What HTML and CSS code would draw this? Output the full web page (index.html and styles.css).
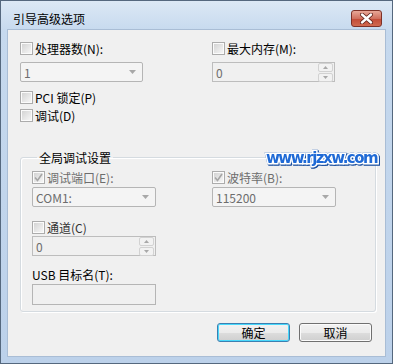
FILE: index.html
```html
<!DOCTYPE html>
<html lang="zh-CN">
<head>
    <meta charset="UTF-8">
    <title>引导高级选项</title>
    <link rel="stylesheet" href="styles.css">
</head>
<body>
    <div class="window">
        <div class="titlebar">
            <span class="title">引导高级选项</span>
            <span class="close">
                <svg width="13" height="11" viewBox="0 0 13 11">
                    <path d="M2 1.5 L11 9.5 M11 1.5 L2 9.5" stroke="#5a1e16" stroke-width="4" stroke-linecap="round"/>
                    <path d="M2 1.5 L11 9.5 M11 1.5 L2 9.5" stroke="#fff" stroke-width="2.4" stroke-linecap="round"/>
                </svg>
            </span>
        </div>
        <div class="client">
            <div class="cols">
                <div class="field">
                    <div class="check"><span class="box"></span>处理器数(N):</div>
                    <div class="combo"><span>1</span><svg class="arrow" width="7" height="4"><path d="M0 0 H7 L3.5 4 Z" fill="#a8a8a8"/></svg></div>
                </div>
                <div class="field">
                    <div class="check"><span class="box"></span>最大内存(M):</div>
                    <div class="spin">
                        <span>0</span>
                        <span class="spin-btns">
                            <i><svg width="5" height="3"><path d="M0 3 H5 L2.5 0 Z" fill="#a8a8a8"/></svg></i>
                            <i><svg width="5" height="3"><path d="M0 0 H5 L2.5 3 Z" fill="#a8a8a8"/></svg></i>
                        </span>
                    </div>
                </div>
            </div>
            <div class="check pci"><span class="box"></span>PCI 锁定(P)</div>
            <div class="check debug"><span class="box"></span>调试(D)</div>

            <fieldset class="group">
                <legend>全局调试设置</legend>
                <div class="group-cols">
                    <div class="field">
                        <div class="check off"><span class="box"><svg width="9" height="9"><path d="M1 4.5 L3.5 7.5 L8 1" stroke="#a6a6a6" stroke-width="1.6" fill="none"/></svg></span>调试端口(E):</div>
                        <div class="combo small-gap"><span>COM1:</span><svg class="arrow" width="7" height="4"><path d="M0 0 H7 L3.5 4 Z" fill="#a8a8a8"/></svg></div>
                    </div>
                    <div class="field">
                        <div class="check off"><span class="box"><svg width="9" height="9"><path d="M1 4.5 L3.5 7.5 L8 1" stroke="#a6a6a6" stroke-width="1.6" fill="none"/></svg></span>波特率(B):</div>
                        <div class="combo small-gap"><span>115200</span><svg class="arrow" width="7" height="4"><path d="M0 0 H7 L3.5 4 Z" fill="#a8a8a8"/></svg></div>
                    </div>
                </div>
                <div class="check channel"><span class="box"></span>通道(C)</div>
                <div class="spin small-gap wide">
                    <span>0</span>
                    <span class="spin-btns">
                        <i><svg width="5" height="3"><path d="M0 3 H5 L2.5 0 Z" fill="#a8a8a8"/></svg></i>
                        <i><svg width="5" height="3"><path d="M0 0 H5 L2.5 3 Z" fill="#a8a8a8"/></svg></i>
                    </span>
                </div>
                <div class="usb-label">USB 目标名(T):</div>
                <div class="textbox"></div>
            </fieldset>

            <div class="buttons">
                <button class="btn default">确定</button>
                <button class="btn">取消</button>
            </div>
        </div>
        <div class="watermark">www.rjzxw.com</div>
    </div>
</body>
</html>
```

FILE: styles.css
```css
body {
    margin: 0;
    font: 12px/13px "Noto Sans CJK SC", sans-serif;
    color: #000;
}
.window {
    position: relative;
    width: 393px;
    height: 364px;
    box-sizing: border-box;
    border: 1px solid #55687e;
    background: linear-gradient(#dce8f5, #c6d9ee 30px, #bcd1ea);
    padding: 0 7px 7px;
    display: flex;
    flex-direction: column;
}
.titlebar {
    height: 29px;
    display: flex;
    justify-content: space-between;
    align-items: flex-start;
    padding: 0 3px 0 5px;
}
.title {
    margin-top: 11px;
}
.close {
    margin-top: 9px;
    width: 31px;
    height: 17px;
    box-sizing: border-box;
    border: 1px solid #7d3127;
    border-radius: 3px;
    background: linear-gradient(#e8a898, #d0705e 50%, #c24a36 51%, #d06a50);
    display: flex;
    align-items: center;
    justify-content: center;
}
.client {
    flex: 1;
    background: #f0f0f0;
    box-shadow: 0 0 0 1px #a9bdd5;
    padding: 12px 0 0 12px;
}
.cols {
    display: grid;
    grid-template-columns: 192px 123px;
}
.check {
    display: flex;
    align-items: center;
    gap: 2px;
    height: 13px;
}
.check.off {
    color: #6d6d6d;
}
.box {
    width: 13px;
    height: 13px;
    box-sizing: border-box;
    border: 1px solid #acacac;
    padding: 1px;
    background: linear-gradient(135deg, #d4d4d4, #f6f6f6) content-box, #fbfbfb;
    display: flex;
    align-items: center;
    justify-content: center;
}
.combo {
    margin-top: 7px;
    width: 123px;
    height: 20px;
    box-sizing: border-box;
    border: 1px solid #b5b5b5;
    border-radius: 2px;
    background: #f4f4f4;
    color: #6d6d6d;
    display: flex;
    align-items: center;
    justify-content: space-between;
    padding: 0 6px 0 3px;
}
.spin {
    margin-top: 7px;
    width: 123px;
    height: 20px;
    box-sizing: border-box;
    border: 1px solid #bdbdbd;
    background: #f0f0f0;
    color: #6d6d6d;
    display: flex;
    align-items: center;
    justify-content: space-between;
    padding: 0 1px 0 3px;
}
.spin-btns {
    display: flex;
    flex-direction: column;
    gap: 1px;
    width: 15px;
}
.spin-btns i {
    height: 7px;
    border: 1px solid #d2d2d2;
    border-radius: 2px;
    background: #f2f2f2;
    display: flex;
    align-items: center;
    justify-content: center;
}
.pci {
    margin-top: 9px;
}
.debug {
    margin-top: 5px;
}
.group {
    margin: 29px 0 0;
    width: 356px;
    box-sizing: border-box;
    border: 1px solid #d5dbe0;
    border-radius: 3px;
    box-shadow: inset 1px 1px #fff, 1px 1px #fff;
    padding: 7px 0 6px 11px;
}
.group legend {
    padding: 0 2px;
    margin-left: 5px;
}
.group-cols {
    display: grid;
    grid-template-columns: 180px 124px;
}
.small-gap {
    margin-top: 3px;
    width: 124px;
}
.channel {
    margin-top: 14px;
    color: #333;
}
.spin.wide {
    margin-top: 2px;
}
.usb-label {
    margin-top: 12px;
}
.textbox {
    margin-top: 3px;
    width: 124px;
    height: 21px;
    box-sizing: border-box;
    border: 1px solid #b5b5b5;
    background: #f0f0f0;
}
.buttons {
    display: flex;
    justify-content: flex-end;
    gap: 9px;
    margin: 11px 13px 0 0;
}
.btn {
    width: 73px;
    height: 19px;
    box-sizing: border-box;
    padding: 0;
    border: 1px solid #707070;
    border-radius: 3px;
    background: linear-gradient(#f2f2f2, #ebebeb 50%, #dddddd 51%, #cfcfcf);
    box-shadow: inset 0 0 0 1px #fbfbfb;
    font: inherit;
    color: #000;
}
.btn.default {
    border-color: #3c7fb1;
    box-shadow: inset 0 0 0 1px #48d8fb;
}
.watermark {
    position: absolute;
    left: 265px;
    top: 148px;
    font: bold 15px/18px "DejaVu Sans", sans-serif;
    letter-spacing: -1.5px;
    color: #1f6ad6;
    -webkit-text-stroke: 3px #fff;
    paint-order: stroke fill;
    filter: drop-shadow(0 0 0.6px #1b4f9e) drop-shadow(1px 1px 0 #1b4f9e);
}
```
